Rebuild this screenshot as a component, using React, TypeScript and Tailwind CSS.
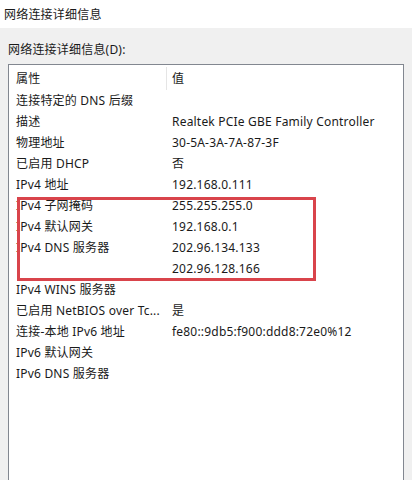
import React from "react";

const rows: [string, string][] = [
  ["连接特定的 DNS 后缀", ""],
  ["描述", "Realtek PCIe GBE Family Controller"],
  ["物理地址", "30-5A-3A-7A-87-3F"],
  ["已启用 DHCP", "否"],
  ["IPv4 地址", "192.168.0.111"],
  ["IPv4 子网掩码", "255.255.255.0"],
  ["IPv4 默认网关", "192.168.0.1"],
  ["IPv4 DNS 服务器", "202.96.134.133"],
  ["", "202.96.128.166"],
  ["IPv4 WINS 服务器", ""],
  ["已启用 NetBIOS over Tc...", "是"],
  ["连接-本地 IPv6 地址", "fe80::9db5:f900:ddd8:72e0%12"],
  ["IPv6 默认网关", ""],
  ["IPv6 DNS 服务器", ""],
];

export default function App() {
  return (
    <div
      className="relative w-[412px] h-[480px] overflow-hidden bg-[#f0f0f0] text-[12px] tracking-[0.2px] text-[#1a1a1a]"
      style={{ fontFamily: '"Noto Sans", "Noto Sans CJK SC", sans-serif' }}
    >
      <div className="h-[28px] bg-white flex items-center pl-[4px] pt-[1px] leading-none">
        网络连接详细信息
      </div>
      <div className="h-[36px] flex items-center pl-[8px] pt-[8px] leading-none">
        网络连接详细信息(D):
      </div>
      <div className="ml-[8px] w-[396px] h-[430px] border border-[#828790] bg-white">
        <div className="flex h-[25px]">
          <div className="w-[157px] flex items-center pl-[7px] pt-[3px]">属性</div>
          <div className="w-px mt-[2px] bg-[#e5e5e5]" />
          <div className="flex-1 flex items-center pl-[5px] pt-[3px]">值</div>
        </div>
        {rows.map(([k, v], i) => (
          <div key={i} className="flex h-[21px] items-center whitespace-nowrap">
            <div className="w-[158px] pl-[7px] overflow-hidden">{k}</div>
            <div className="pl-[5px]">{v}</div>
          </div>
        ))}
      </div>
      <div className="absolute left-[17px] top-[197px] w-[299px] h-[84px] border-[3px] border-[#d9444b]" />
    </div>
  );
}
